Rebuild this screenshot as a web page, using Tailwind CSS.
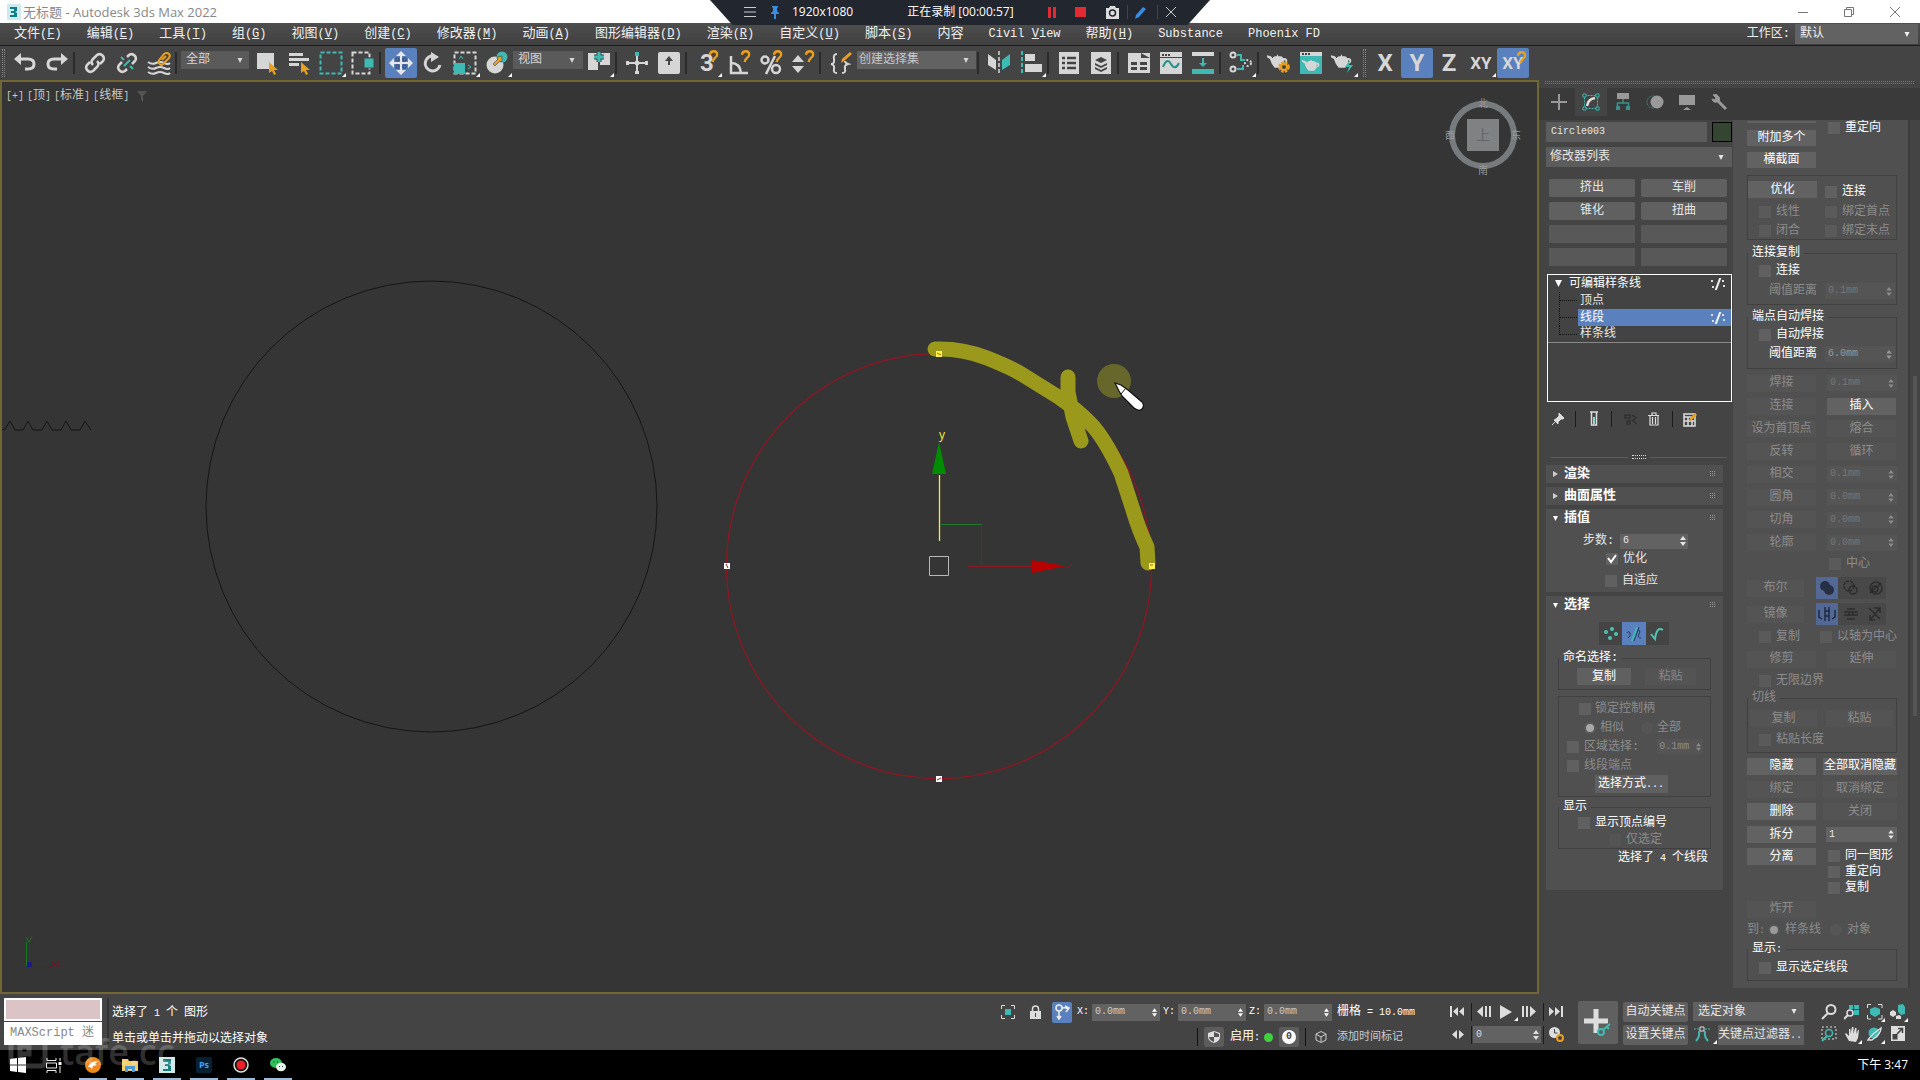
<!DOCTYPE html>
<html lang="zh-CN">
<head>
<meta charset="utf-8">
<title>无标题 - Autodesk 3ds Max 2022</title>
<script src="https://cdn.jsdelivr.net/npm/@tailwindcss/browser@4"></script>
</head>
<body class="flex h-screen flex-col overflow-hidden bg-[#444] font-['Liberation_Mono','Noto_Sans_CJK_SC',monospace] text-[12px] leading-4 text-[#e6e6e6]">

<svg class="hidden">
  <symbol id="spin" viewBox="0 0 6 10"><path d="M3 0 6 4H0zM3 10 0 6h6z" fill="currentColor"/></symbol>
  <symbol id="down" viewBox="0 0 6 6"><path d="M0 0h6L3 6z" fill="currentColor"/></symbol>
  <symbol id="fly" viewBox="0 0 4 4"><path d="M4 0v4H0z" fill="#fff"/></symbol>
  <symbol id="dots" viewBox="0 0 6 6"><path d="M0 0h1v1H0zM2 0h1v1H2zM4 0h1v1H4zM0 2h1v1H0zM2 2h1v1H2zM4 2h1v1H4zM0 4h1v1H0zM2 4h1v1H2zM4 4h1v1H4z" fill="#999"/></symbol>
  <symbol id="magnet" viewBox="0 0 12 14"><path d="M2 5C3 0 10 0 10 5c0 3-4 3-5 8" fill="none" stroke="#e8a020" stroke-width="2.500"/></symbol>
  <symbol id="teapot" viewBox="0 0 22 16"><path d="M0 2l4 1 2 2c1-2 2-2 4-2l1-2 1 2c3 0 4 0 5 2 5-1 6 5 1 6l-3 4H8L5 11 3 6 0 4zM18 7v3q3-2 0-3" fill="currentColor"/></symbol>
  <symbol id="seg" viewBox="0 0 14 12"><path d="M8.500 0H10L5.500 12H4z" fill="#fff" stroke="#fff" stroke-width=".5"/><path d="M0 2h2v2H0zM1 8h2v2H1zM11 2h2v2h-2zM12 7h2v2h-2z" fill="#ddd"/></symbol>
</svg>

<!-- Title bar with the recorder's floating strip -->
<header class="relative flex h-[23px] shrink-0 items-center bg-white pl-[7px] font-['Open_Sans','Noto_Sans_CJK_SC',sans-serif] text-[#888]">
  <svg width="14" height="16" viewBox="0 0 14 16"><rect width="14" height="16" rx="1" fill="#cfeaec"/><path d="M3 3h7v4l-2 1 2 1v4H3v-2h4V9H4V7h3V5H3z" fill="#0c7f86"/></svg>
  <h1 class="ml-[2px] text-[13px] whitespace-pre">无标题 - Autodesk 3ds Max 2022</h1>
  <div class="ml-auto flex h-full items-center gap-[36px] pr-[20px] text-[#777]">
    <button aria-label="最小化"><svg width="10" height="10"><path d="M0 5.500h10" stroke="currentColor"/></svg></button>
    <button aria-label="还原"><svg width="10" height="10" fill="none" stroke="currentColor"><path d="M.5 2.500h7v7h-7zM2.500 2.500v-2h7v7h-2"/></svg></button>
    <button aria-label="关闭"><svg width="10" height="10"><path d="M0 0l10 10M10 0L0 10" stroke="currentColor"/></svg></button>
  </div>
  <div class="absolute top-0 left-1/2 z-10 flex h-[25px] w-[500px] -translate-x-1/2 items-center bg-[#22262f] pb-[1px] pl-[34px] text-white [clip-path:polygon(0_0,100%_0,95.500%_100%,4.500%_100%)]">
    <svg width="12" height="12"><path d="M0 1.500h12M0 6h12M0 10.500h12" stroke="#ccc"/></svg>
    <svg class="ml-[14px]" width="10" height="13"><path d="M2 0h6v1.500H7V5l2 2v1H6v5H4V8H1V7l2-2V1.500H2z" fill="#3b8de0"/></svg>
    <span class="ml-[12px]">1920x1080</span>
    <span class="ml-[54px]">正在录制 [00:00:57]</span>
    <svg class="ml-[34px]" width="8" height="11"><path d="M0 0h3v11H0zM5 0h3v11H5z" fill="#e12a33"/></svg>
    <svg class="ml-[19px]" width="11" height="10"><rect width="11" height="10" fill="#e12a33"/></svg>
    <svg class="ml-[19px]" width="15" height="13"><path d="M1 2h3l1-2h5l1 2h3v11H1z" fill="#ddd"/><circle cx="7.500" cy="7" r="3" fill="none" stroke="#22262f" stroke-width="1.500"/></svg>
    <i class="ml-[7px] h-[14px] w-px bg-[#444]"></i>
    <svg class="ml-[7px]" width="12" height="13"><path d="M0 13l1-4 7-8 3 2-7 8z" fill="#3b8de0"/></svg>
    <i class="ml-[10px] h-[14px] w-px bg-[#444]"></i>
    <svg class="ml-[8px]" width="10" height="10"><path d="M0 0l10 10M10 0L0 10" stroke="#ccc"/></svg>
  </div>
</header>

<!-- Menu bar -->
<nav class="flex h-[23px] shrink-0 items-center gap-[25px] border-b border-[#1c1c1c] bg-linear-to-b from-[#4e4e4e] to-[#404040] pl-[14px] text-[13px] whitespace-pre text-[#f0f0f0] [&_span]:text-[12px]">
  <a href="#">文件<span>(<u>F</u>)</span></a><a href="#">编辑<span>(<u>E</u>)</span></a><a href="#">工具<span>(<u>T</u>)</span></a><a href="#">组<span>(<u>G</u>)</span></a><a href="#">视图<span>(<u>V</u>)</span></a><a href="#">创建<span>(<u>C</u>)</span></a><a href="#">修改器<span>(<u>M</u>)</span></a><a href="#">动画<span>(<u>A</u>)</span></a><a href="#">图形编辑器<span>(<u>D</u>)</span></a><a href="#">渲染<span>(<u>R</u>)</span></a><a href="#">自定义<span>(<u>U</u>)</span></a><a href="#">脚本<span>(<u>S</u>)</span></a><a href="#">内容</a><a href="#"><span>Civil <u>V</u>iew</span></a><a href="#">帮助<span>(<u>H</u>)</span></a><a href="#"><span>Substance</span></a><a href="#"><span>Phoenix FD</span></a>
  <div class="ml-auto flex h-full items-center pr-[2px] text-[12px]">
    <label for="ws" class="pr-[5px]">工作区:</label>
    <div class="flex h-[20px] w-[123px] items-center bg-[#626262] pr-[8px] pl-[5px]"><select id="ws" class="min-w-0 flex-1 appearance-none"><option>默认</option></select><svg width="6" height="5"><use href="#down"/></svg></div>
  </div>
</nav>

<!-- Main toolbar -->
<div class="flex h-[34px] shrink-0 items-center pl-[2px] text-[#d6d6d6] [&_i]:h-[22px] [&_i]:w-[6px] [&_i]:border-l-2 [&_i]:border-[#2a2a2a] [&>button]:relative [&>button]:grid [&>button]:h-[30px] [&>button]:w-[32px] [&>button]:shrink-0 [&>button]:place-items-center">
  <span class="mr-[4px] h-[28px] w-[3px] border-x border-dotted border-[#888]"></span>
  <button aria-label="撤销"><svg width="22" height="20" fill="none" stroke="currentColor" stroke-width="3"><path d="M4 6h10q6 0 6 5t-6 5h-3"/><path d="M0 6l7-6v12z" fill="currentColor" stroke="none"/></svg></button>
  <button aria-label="重做"><svg width="22" height="20" fill="none" stroke="currentColor" stroke-width="3"><path d="M18 6H8q-6 0-6 5t6 5h3"/><path d="M22 6l-7-6v12z" fill="currentColor" stroke="none"/></svg></button>
  <i></i>
  <button aria-label="链接"><svg width="22" height="22" viewBox="0 0 22 22" fill="none" stroke="currentColor" stroke-width="2.500"><path d="M9 13q-3-3 0-6l4-4q3-2 5.500.5T19 9l-3 3M13 9q3 3 0 6l-4 4q-3 2-5.500-.5T3 13l3-3"/></svg></button>
  <button aria-label="取消链接"><svg width="22" height="22" viewBox="0 0 22 22" fill="none" stroke="currentColor" stroke-width="2.500"><path d="M11 5l2-2q3-2 5.500.5T19 9l-3 3M11 17l-2 2q-3 2-5.500-.5T3 13l3-3"/><path d="M8 8L5 5M14 14l3 3M8 14l6-6" stroke="#3fb9b3" stroke-width="2"/></svg></button>
  <button aria-label="绑定到空间扭曲"><svg width="24" height="24" viewBox="0 0 24 24" fill="none" stroke="currentColor" stroke-width="2"><path d="M1 11q4 3 8 1t8 0 6 0M1 16q4 3 8 1t8 0 6 0M1 21q4 3 8 1t8 0 6 0"/><path d="M13 13q-3-2 0-5l4-5q3-2 5 0t-1 5l-5 5q-2 2-3 0M15 9l4-4" stroke="#e8a020"/></svg></button>
  <i></i>
  <div class="mr-[2px] mb-[6px] flex h-[18px] w-[68px] items-center bg-[#5a5a5a] pr-[6px] pl-[5px]"><select aria-label="选择过滤器" class="min-w-0 flex-1 appearance-none"><option>全部</option></select><svg width="6" height="5"><use href="#down"/></svg></div>
  <button aria-label="选择对象"><svg width="24" height="24"><rect x="2" y="2" width="17" height="16" fill="currentColor"/><path d="M14 11v11l3-2 2 4 2-1-2-4h4z" fill="#e8a020"/></svg></button>
  <button aria-label="按名称选择"><svg width="24" height="24"><path d="M2 2h14v3H2zM2 7h20v3H2zM2 12h10v3H2z" fill="currentColor"/><path d="M14 11v11l3-2 2 4 2-1-2-4h4z" fill="#e8a020"/></svg></button>
  <button aria-label="矩形选择区域"><svg width="24" height="24"><rect x="1.500" y="1.500" width="21" height="21" fill="none" stroke="#3fb9b3" stroke-width="2" stroke-dasharray="4 2"/></svg><svg class="absolute right-[1px] bottom-[1px]" width="4" height="4"><use href="#fly"/></svg></button>
  <button aria-label="窗口/交叉"><svg width="24" height="24"><rect x="1.500" y="1.500" width="17" height="21" fill="none" stroke="currentColor" stroke-width="2" stroke-dasharray="4 2"/><rect x="13" y="7" width="10" height="10" fill="#3fb9b3" stroke="#444"/></svg></button>
  <i></i>
  <button aria-label="选择并移动" class="rounded-xs bg-[#5a80bd]"><svg width="24" height="24" viewBox="0 0 24 24"><path d="M12 0l5 5h-4v6h6V7l5 5-5 5v-4h-6v6h4l-5 5-5-5h4v-6H5v4l-5-5 5-5v4h6V5H7z" fill="#e6e6e6"/><path d="M7 7h3v3H7zM14 7h3v3h-3zM7 14h3v3H7zM14 14h3v3h-3z" fill="none" stroke="#2f4568"/></svg></button>
  <button aria-label="选择并旋转"><svg width="20" height="22" fill="none" stroke="currentColor" stroke-width="3"><path d="M11 4A7.500 7.500 0 1 0 17 13"/><path d="M8 0l8 5-8 5z" fill="currentColor" stroke="none"/></svg></button>
  <button aria-label="选择并缩放"><svg width="24" height="24"><rect x="1.500" y="1.500" width="21" height="21" fill="none" stroke="currentColor" stroke-width="2" stroke-dasharray="4 2"/><rect x="1" y="12" width="11" height="11" fill="#3fb9b3"/><path d="M6 8l2-3 2 3M15 14l3 2-3 2" fill="none" stroke="#3fb9b3"/></svg><svg class="absolute right-[1px] bottom-[1px]" width="4" height="4"><use href="#fly"/></svg></button>
  <button aria-label="选择并放置"><svg width="24" height="24"><circle cx="10" cy="14" r="8.500" fill="currentColor"/><circle cx="17" cy="6" r="5.500" fill="#3fb9b3"/><path d="M17 5v6l-2-1-5 5-2-2 5-5-1-2z" fill="#e8a020" stroke="#444" stroke-width=".6"/></svg><svg class="absolute right-[1px] bottom-[1px]" width="4" height="4"><use href="#fly"/></svg></button>
  <div class="mb-[6px] flex h-[18px] w-[70px] items-center bg-[#5a5a5a] pr-[8px] pl-[5px]"><select aria-label="参考坐标系" class="min-w-0 flex-1 appearance-none"><option>视图</option></select><svg width="6" height="5"><use href="#down"/></svg></div>
  <button aria-label="使用轴点中心"><svg width="24" height="24"><path d="M1 2h10v17H1zM13 2h10v12H13z" fill="currentColor"/><path d="M12 1v10M7 6h10" stroke="#444" stroke-width="5"/><path d="M12 1v10M7 6h10" stroke="#3fb9b3" stroke-width="3"/></svg><svg class="absolute right-[1px] bottom-[1px]" width="4" height="4"><use href="#fly"/></svg></button>
  <i></i>
  <button aria-label="选择并操纵"><svg width="22" height="24"><path d="M11 3v19M1 12h20" stroke="currentColor" stroke-width="2"/><rect x="9" y="1" width="4" height="4" fill="#3fb9b3"/><path d="M0 10h3v4H0zM19 10h3v4h-3zM9 20h4v3H9zM9 10h4v4H9z" fill="currentColor"/></svg></button>
  <button aria-label="键盘快捷键覆盖切换"><svg width="22" height="22"><rect width="22" height="22" rx="2" fill="currentColor"/><path d="M11 4l4 5h-3v4h-2V9H7z" fill="#444"/></svg></button>
  <i></i>
  <button aria-label="捕捉开关"><span class="font-['Roboto',sans-serif] text-[24px] font-bold">3</span><svg class="absolute top-[2px] right-[4px]" width="11" height="13"><use href="#magnet"/></svg><svg class="absolute right-[1px] bottom-[1px]" width="4" height="4"><use href="#fly"/></svg></button>
  <button aria-label="角度捕捉切换"><svg width="22" height="24" fill="none" stroke="currentColor" stroke-width="2.500"><path d="M3 5v17h17M3 12q9 0 10 10"/></svg><svg class="absolute top-[2px] right-[4px]" width="11" height="13"><use href="#magnet"/></svg></button>
  <button aria-label="百分比捕捉切换"><svg width="24" height="24" fill="none" stroke="currentColor" stroke-width="2.500"><circle cx="6" cy="9" r="3.500"/><circle cx="17" cy="18" r="4"/><path d="M16 5L7 23"/></svg><svg class="absolute top-[2px] right-[4px]" width="11" height="13"><use href="#magnet"/></svg></button>
  <button aria-label="微调器捕捉切换"><svg width="24" height="24" fill="currentColor"><path d="M7 4l6 7H1zM7 22l-6-7h12z"/></svg><svg class="absolute top-[2px] right-[4px]" width="11" height="13"><use href="#magnet"/></svg></button>
  <i></i>
  <button aria-label="编辑命名选择集"><svg width="24" height="24" fill="none" stroke="currentColor" stroke-width="2"><path d="M8 3Q4 3 5 8t-3 5q4 1 3 5t3 4M13 22q4 0 3-4t3-5q-3-1-3-3"/><path d="M12 12l1-4 8-7 2 2-8 7z" fill="#e8a020" stroke="none"/></svg></button>
  <div class="mr-[1px] mb-[6px] flex h-[18px] w-[119px] items-center bg-[#626262] pr-[7px] pl-[2px]"><select aria-label="创建选择集" class="min-w-0 flex-1 appearance-none text-[#c8c8c8]"><option>创建选择集</option></select><svg width="6" height="5"><use href="#down"/></svg></div>
  <i></i>
  <button aria-label="镜像"><svg width="24" height="24"><path d="M1 3l8 6v10l-8-5z" fill="currentColor"/><path d="M23 3l-8 6v10l8-5z" fill="#3fb9b3"/><path d="M12 0v24" stroke="currentColor" stroke-width="1.500" stroke-dasharray="4 2"/></svg></button>
  <button aria-label="对齐"><svg width="24" height="24"><path d="M3 0v24" stroke="#3fb9b3" stroke-width="2" stroke-dasharray="4 2"/><path d="M6 3h10v7H6zM6 13h17v8H6z" fill="currentColor"/></svg><svg class="absolute right-[1px] bottom-[1px]" width="4" height="4"><use href="#fly"/></svg></button>
  <i></i>
  <button aria-label="切换场景资源管理器"><svg width="22" height="24"><path d="M1 1h20v22H1z" fill="currentColor"/><path d="M4 7h3M4 12h3M4 17h3M9 7h9M9 12h9M9 17h9" stroke="#444" stroke-width="2.500"/></svg></button>
  <button aria-label="切换层资源管理器"><svg width="22" height="24"><path d="M1 1h20v22H1z" fill="currentColor"/><path d="M11 6l6 3-6 3-6-3zM5 12l6 3 6-3v2l-6 3-6-3zM5 16l6 3 6-3v2l-6 3-6-3z" fill="#444"/></svg></button>
  <i></i>
  <button aria-label="显示功能区"><svg width="24" height="22"><path d="M1 1h22v20H1z" fill="currentColor"/><path d="M14 1v5h9M4 10h6v3H4zM13 10h7v3h-7zM4 15h6v3H4zM13 15h7v3h-7z" fill="#444"/></svg></button>
  <button aria-label="曲线编辑器"><svg width="24" height="22"><path d="M1 0h22v22H1z" fill="currentColor"/><path d="M1 5.500h22" stroke="#444"/><path d="M3 2h2v2H3zM6 2h2v2H6zM9 2h2v2H9z" fill="#444"/><path d="M4 15q4-10 8-3t8-1" fill="none" stroke="#23908c" stroke-width="2"/></svg></button>
  <button aria-label="图解视图"><svg width="24" height="24"><path d="M1 18h22v5H1z" fill="#3fb9b3"/><path d="M1 1h22v4H1z" fill="currentColor"/><path d="M11 7h2v5h3l-4 4-4-4h3z" fill="#3fb9b3"/></svg></button>
  <i></i>
  <button aria-label="材质编辑器"><svg width="24" height="24" fill="none" stroke="currentColor" stroke-width="2"><circle cx="4" cy="4" r="2.500"/><circle cx="4" cy="18" r="2.500"/><circle cx="19" cy="12" r="3" stroke-dasharray="2 2"/><path d="M8 4h4v5h4M8 18h6v-4" stroke="#3fb9b3"/></svg><svg class="absolute right-[1px] bottom-[1px]" width="4" height="4"><use href="#fly"/></svg></button>
  <i></i>
  <button aria-label="渲染设置"><svg width="24" height="22"><svg y="1" width="21" height="16"><use href="#teapot"/></svg><circle cx="17" cy="15" r="4" fill="#444" stroke="#e8a020" stroke-width="3.500" stroke-dasharray="2.200 1"/><circle cx="17" cy="15" r="3" fill="none" stroke="#e8a020" stroke-width="2"/></svg></button>
  <button aria-label="渲染帧窗口"><svg width="24" height="22"><path d="M1 0h22v22H1z" fill="#3fb9b3"/><path d="M1 0h22v4H1z" fill="currentColor"/><path d="M3 1h2v2H3zM6 1h2v2H6zM9 1h2v2H9z" fill="#444"/><svg x="3" y="6" width="18" height="14"><use href="#teapot"/></svg></svg></button>
  <button aria-label="渲染产品"><svg width="24" height="22"><svg y="1" width="21" height="16"><use href="#teapot"/></svg><path d="M18 9l-4 6h4l-2 6 6-8h-4z" fill="#3fb9b3"/></svg><svg class="absolute right-[1px] bottom-[1px]" width="4" height="4"><use href="#fly"/></svg></button>
  <span class="mr-[3px] ml-[4px] h-[28px] w-[3px] border-x border-dotted border-[#888]"></span>
  <button class="font-['Roboto',sans-serif] text-[24px] font-bold">X</button>
  <button class="rounded-xs bg-[#5a80bd] font-['Roboto',sans-serif] text-[24px] font-bold">Y</button>
  <button class="font-['Roboto',sans-serif] text-[24px] font-bold">Z</button>
  <button class="font-['Roboto',sans-serif] text-[17px] font-bold">XY<svg class="absolute right-[1px] bottom-[1px]" width="4" height="4"><use href="#fly"/></svg></button>
  <button class="rounded-xs bg-[#5a80bd] font-['Roboto',sans-serif] text-[17px] font-bold">XY<svg class="absolute top-[3px] right-[2px]" width="11" height="13"><use href="#magnet"/></svg></button>
</div>

<div class="flex min-h-0 flex-1">
  <!-- Viewport: top view, wireframe -->
  <main class="relative min-w-0 flex-1 overflow-hidden border-2 border-[#6f6734] bg-[#353535]">
    <div class="absolute top-[6px] left-[4px] z-10 flex items-center gap-[3px] text-[#c8c8c8] [&_b]:text-[10px] [&_b]:font-normal">
      <button><b>[+]</b></button><button><b>[</b>顶<b>]</b></button><button><b>[</b>标准<b>]</b></button><button><b>[</b>线框<b>]</b></button>
      <svg class="ml-[5px]" width="10" height="11"><path d="M0 0h10L6 5v6L4 9V5z" fill="#555"/></svg>
    </div>
    <svg class="block h-full w-full text-[12px]">
      <g transform="translate(-2 -82)" fill="none">
        <circle cx="431.500" cy="506.500" r="225.500" stroke="#151515"/>
        <path d="M2 430l3-1 5-8 5 9h8l5-9 5 9h9l5-9 5 9h9l5-9 5 9h9l5-9 6 9" stroke="#151515"/>
        <circle cx="939" cy="566" r="212.500" stroke="#8c1722" stroke-width="1.300"/>
        <path d="M935 349Q962 348 987 358T1023 375L1060 398Q1076 409 1090 423T1121 473L1133 510Q1139 530 1147 547L1148 563M1068 377V392L1073 417 1081 441" stroke="#9b991b" stroke-width="15" stroke-linecap="round" stroke-linejoin="round"/>
        <path d="M936 351h6v6h-6zM1149 563h6v6h-6z" fill="#fff34a"/>
        <path d="M937 353l4 2M1150 565h3" stroke="#8c6a10"/>
        <path d="M724 563h6v6h-6zM936 776h6v6h-6z" fill="#fff"/>
        <path d="M726 564l2 4M937 780l4-2" stroke="#8c1722"/>
        <circle cx="1114" cy="381" r="17" fill="#67672b"/>
        <path d="M1115 383l4 8 3 5 12 12q5 4 8 1t0-7l-14-12-7-5z" fill="#fff" stroke="#111" stroke-width="1.200"/>
        <path d="M1121 394l5-6" stroke="#111"/>
        <path d="M939.500 475v66" stroke="#f5f038" stroke-width="1.300"/>
        <path d="M939 442l7 32h-14z" fill="#008c00"/>
        <path d="M940 524.500h42" stroke="#1c7a28"/>
        <path d="M981.500 525v41M968 566.500h66" stroke="#8c1722"/>
        <path d="M1032 560v13l34-7z" fill="#b80000"/>
        <path d="M1067 568l5-4" stroke="#8c1722"/>
        <path d="M929.500 556.500h19v19h-19z" stroke="#b8b8b8"/>
        <text x="939" y="439" fill="#f5f038" class="font-['Open_Sans',sans-serif]">y</text>
        <path d="M26.500 942v24M26 937l3 5 3-5" stroke="#157a22"/>
        <path d="M32 967.500h18M50 967l9-5M52 962l7 5" stroke="#7a1020"/>
        <path d="M27 962h5v5h-5z" fill="#1a1a8a"/>
      </g>
    </svg>
    <div class="absolute top-[14px] right-[16px] z-10 text-[10px] leading-3 text-[#999]">
      <svg width="76" height="82">
        <circle cx="38" cy="39" r="31" fill="none" stroke="#777b7d" stroke-width="6"/>
        <rect x="22" y="23" width="32" height="32" fill="#7f8182"/>
        <g fill="#9a9a9a" text-anchor="middle">
          <text x="38" y="11">北</text><text x="38" y="78">南</text><text x="5" y="43">西</text><text x="71" y="43">东</text>
          <text x="38" y="44" fill="#626568" font-size="14">上</text>
        </g>
      </svg>
    </div>
  </main>

  <!-- Command panel -->
  <aside class="flex w-[381px] shrink-0 flex-col whitespace-nowrap [&_input[type=checkbox]]:size-[12px] [&_input[type=checkbox]]:shrink-0 [&_input[type=checkbox]]:appearance-none [&_input[type=checkbox]]:bg-[#606060] [&_input[type=radio]]:size-[12px] [&_input[type=radio]]:appearance-none [&_input[type=radio]]:rounded-full [&_input[type=text]]:min-w-0 [&_input[type=text]]:flex-1 [&_input[type=text]]:text-[10px] [&_label]:flex [&_label]:items-center [&_legend]:px-[4px] [&_legend]:leading-3">
    <div class="mx-[6px] mt-[1px] h-[3px] shrink-0 border-y border-dotted border-[#777]"></div>
    <div class="mt-[4px] flex h-[32px] shrink-0 items-center bg-[#3a3a3a] pb-[4px] pl-[4px] [&>button]:grid [&>button]:h-full [&>button]:w-[32px] [&>button]:place-items-center">
      <button aria-label="创建"><svg width="16" height="16"><path d="M8 0v16M0 8h16" stroke="#999" stroke-width="2"/></svg></button>
      <button aria-label="修改" class="bg-[#444]"><svg width="18" height="18" fill="none"><rect x="2.500" y="2.500" width="13" height="13" stroke="#3fb9b3" stroke-dasharray="2 1"/><path d="M1 1h3v3H1zM14 1h3v3h-3zM1 14h3v3H1zM14 14h3v3h-3z" fill="#3a3a3a" stroke="#3fb9b3"/><path d="M5 13q1-7 8-8" stroke="#ddd" stroke-width="2.500"/></svg></button>
      <button aria-label="层次"><svg width="16" height="18"><path d="M2 0h12v6H2z" fill="#999"/><path d="M8 6v4M2.500 14v-4h11v4" fill="none" stroke="#3c8f8a" stroke-width="1.500"/><path d="M1 13h4v4H1zM11 13h4v4h-4z" fill="#3c8f8a"/></svg></button>
      <button aria-label="运动"><svg width="20" height="16"><circle cx="8" cy="8" r="6" fill="none" stroke="#3c8f8a" stroke-dasharray="2 1"/><circle cx="12" cy="8" r="6.500" fill="#999"/></svg></button>
      <button aria-label="显示"><svg width="18" height="16"><path d="M1 1h16v10H1zM5 16l4-3 4 3z" fill="#999"/></svg></button>
      <button aria-label="实用程序"><svg width="16" height="16" fill="none" stroke="#999"><path d="M6 6l9 9" stroke-width="3"/><path d="M2 1l3 3-1 2-3-1q1 4 5 3t2-5-6-2" fill="#999"/></svg></button>
    </div>

    <div class="flex min-h-0 flex-1">
      <!-- Modifier stack and rollouts -->
      <section class="ml-[7px] w-[186px] shrink-0 pt-[2px]">
        <div class="flex h-[20px] gap-[5px]">
          <input type="text" aria-label="对象名称" value="Circle003" class="bg-[#5c5c5c] pl-[5px]">
          <button aria-label="对象颜色" class="w-[20px] border border-black bg-[#344632]"></button>
        </div>
        <div class="mt-[5px] flex h-[20px] items-center bg-[#5c5c5c] pr-[8px] pl-[4px]"><select aria-label="修改器列表" class="min-w-0 flex-1 appearance-none"><option>修改器列表</option></select><svg width="6" height="5"><use href="#down"/></svg></div>
        <div class="mt-[12px] ml-[3px] grid w-[178px] auto-rows-[18px] grid-cols-2 gap-x-[6px] gap-y-[5px] [&>button]:rounded-xs [&>button]:bg-[#606060]">
          <button>挤出</button><button>车削</button><button>锥化</button><button>扭曲</button>
          <span class="bg-[#585858]"></span><span class="bg-[#585858]"></span><span class="bg-[#585858]"></span><span class="bg-[#585858]"></span>
        </div>
        <ul class="mt-[8px] ml-[1px] h-[128px] border border-white bg-[#434343] [&_li]:flex [&_li]:h-[17px] [&_li]:items-center">
          <li class="pl-[7px] text-white"><svg width="7" height="7"><use href="#down"/></svg><span class="ml-[7px] flex-1">可编辑样条线</span><svg class="mr-[6px]" width="14" height="12"><use href="#seg"/></svg></li>
          <li class="pl-[11px]"><span class="h-full w-[18px] border-l border-dotted border-[#111]"><span class="mt-[8px] block border-b border-dotted border-[#111]"></span></span><span class="ml-[3px]">顶点</span></li>
          <li class="pl-[11px]"><span class="h-full w-[18px] border-l border-dotted border-[#111]"><span class="mt-[8px] block border-b border-dotted border-[#111]"></span></span><span class="ml-[1px] flex h-full flex-1 items-center bg-[#5a80bd] pl-[2px] text-white"><span class="flex-1">线段</span><svg class="mr-[6px]" width="14" height="12"><use href="#seg"/></svg></span></li>
          <li class="border-b border-[#888] pl-[11px]"><span class="h-full w-[18px]"><span class="block h-[9px] border-b border-l border-dotted border-[#111]"></span></span><span class="ml-[3px]">样条线</span></li>
        </ul>
        <div class="mt-[6px] flex h-[22px] items-center pl-[5px] [&>i]:h-[16px] [&>i]:w-px [&>i]:bg-[#1c1c1c]">
          <button aria-label="锁定堆栈"><svg width="14" height="14"><path d="M8 1l5 5-1 1-2 0-3 3 0 2L3 8l2-1 3-3zM5 9L1 13" fill="#ddd" stroke="#ddd"/></svg></button>
          <i class="ml-[10px]"></i>
          <button aria-label="显示最终结果" class="ml-[14px]"><svg width="8" height="16"><path d="M0 1h8M1.500 1v13h5V1" fill="none" stroke="#ddd" stroke-width="1.500"/><path d="M3 6h2v7H3z" fill="#8fd8d0"/></svg></button>
          <i class="ml-[13px]"></i>
          <button aria-label="使唯一" class="ml-[12px]" disabled><svg width="14" height="12" fill="none" stroke="#303030" stroke-width="1.500"><path d="M1 2h5v3H1zM8 2l4 3-4 3M3 8h3v3H3zM9 8l4 3"/></svg></button>
          <button aria-label="移除修改器" class="ml-[10px]"><svg width="12" height="14" fill="none" stroke="#ddd" stroke-width="1.200"><path d="M0 3.500h11M4 3V1h4v2M2 4v9h8V4M4.500 5v7M7.500 5v7"/></svg></button>
          <i class="ml-[12px]"></i>
          <button aria-label="配置修改器集" class="ml-[10px]"><svg width="14" height="15"><path d="M1 2h11v12H1zM1 5h11M1 9h11M5 5v9M9 9v5" fill="none" stroke="#ddd" stroke-width="1.500"/><path d="M6 9l1-3 5-5 2 2-5 5z" fill="#e8a020"/></svg></button>
        </div>
        <div class="mt-[20px] flex h-[14px] items-center gap-[4px] px-[5px]"><hr class="flex-1 border-[#5c5c5c]"><span class="h-[4px] w-[14px] border-y border-dotted border-[#ddd]"></span><hr class="flex-1 border-[#5c5c5c]"></div>

        <div class="mt-px mr-[9px] flex flex-col gap-[4px] [&_h2]:flex [&_h2]:h-[18px] [&_h2]:items-center [&_h2]:pr-[7px] [&_h2]:pl-[7px] [&_h2]:text-[13px] [&_h2]:font-bold [&_h2]:text-white [&_h2>span]:ml-[6px] [&_h2>span]:flex-1 [&>div]:bg-[#505050]">
          <div><h2><svg width="5" height="6"><path d="M0 0l5 3-5 3z" fill="#ccc"/></svg><span>渲染</span><svg width="6" height="6"><use href="#dots"/></svg></h2></div>
          <div><h2><svg width="5" height="6"><path d="M0 0l5 3-5 3z" fill="#ccc"/></svg><span>曲面属性</span><svg width="6" height="6"><use href="#dots"/></svg></h2></div>
          <div class="h-[83px]">
            <h2><svg width="5" height="5"><use href="#down"/></svg><span>插值</span><svg width="6" height="6"><use href="#dots"/></svg></h2>
            <div class="mt-[6px] flex h-[16px] items-center pl-[37px]"><label for="steps" class="w-[37px]">步数:</label><span class="flex h-[15px] w-[68px] items-center bg-[#626262] pr-[2px] pl-[3px]"><input type="text" id="steps" value="6"><svg width="6" height="10"><use href="#spin"/></svg></span></div>
            <label class="mt-[1px] h-[18px] gap-[5px] pl-[60px]"><span class="grid"><input type="checkbox" checked class="col-start-1 row-start-1"><svg class="col-start-1 row-start-1" width="12" height="12"><path d="M2 5l3 4 5-7" fill="none" stroke="#fff" stroke-width="2"/></svg></span>优化</label>
            <label class="mt-[4px] h-[18px] gap-[5px] pl-[59px]"><input type="checkbox">自适应</label>
          </div>
          <div class="h-[294px]">
            <h2><svg width="5" height="5"><use href="#down"/></svg><span>选择</span><svg width="6" height="6"><use href="#dots"/></svg></h2>
            <div class="mt-[8px] ml-[53px] flex h-[23px] w-[70px] bg-[#444] [&>button]:grid [&>button]:flex-1 [&>button]:place-items-center">
              <button aria-label="顶点"><svg width="16" height="16" fill="#4cc4b4"><circle cx="3" cy="6" r="2"/><circle cx="9" cy="3" r="2"/><circle cx="13" cy="8" r="2"/><circle cx="7" cy="12" r="2"/></svg></button>
              <button aria-label="线段" class="bg-[#5a80bd]"><svg width="16" height="16" fill="none"><path d="M6 15l5-14" stroke="#3fb9b3" stroke-width="2"/><path d="M1 7q2-3 3 0t-2 5M12 4q3 0 1 4t2 4" stroke="#223a60"/><path d="M8 15l5-14" stroke="#223a60"/></svg></button>
              <button aria-label="样条线"><svg width="14" height="16"><path d="M1 8l4 5q1-7 3-9 2-2 5 0" fill="none" stroke="#4cc4b4" stroke-width="2"/></svg></button>
            </div>
            <fieldset class="mt-[7px] ml-[12px] h-[38px] w-[153px] border border-[#404040]"><legend class="text-white">命名选择:</legend>
              <div class="mt-[4px] flex gap-[14px] pl-[18px]"><button class="h-[17px] w-[54px] bg-[#606060] text-white">复制</button><button disabled class="h-[17px] w-[51px] bg-[#545454] text-[#888]">粘贴</button></div>
            </fieldset>
            <div class="mt-[6px] ml-[12px] h-[101px] w-[153px] border border-[#404040] pt-[2px] text-[#8c8c8c] [&_input[type=checkbox]]:bg-[#555]">
              <label class="h-[19px] gap-[4px] pl-[20px]"><input type="checkbox" disabled>锁定控制柄</label>
              <div class="flex h-[19px] items-center"><label class="gap-[4px] pl-[25px]"><input type="radio" name="alike" disabled checked class="border-2 border-[#5a5a5a] bg-[#aaa]">相似</label><label class="gap-[4px] pl-[17px]"><input type="radio" name="alike" disabled class="bg-[#555]">全部</label></div>
              <div class="flex h-[19px] items-center"><label class="gap-[5px] pl-[8px]"><input type="checkbox" disabled>区域选择:</label><span class="ml-[18px] flex h-[15px] w-[46px] items-center bg-[#555] px-[2px]"><input type="text" aria-label="区域选择" value="0.1mm" disabled><svg width="5" height="8"><use href="#spin"/></svg></span></div>
              <label class="h-[19px] gap-[5px] pl-[8px]"><input type="checkbox" disabled>线段端点</label>
              <button class="ml-[36px] block h-[18px] w-[73px] bg-[#606060] pl-[3px] text-left text-white">选择方式<span class="text-[10px]">...</span></button>
            </div>
            <fieldset class="mt-[4px] ml-[12px] h-[48px] w-[153px] border border-[#404040]"><legend class="text-white">显示</legend>
              <label class="mt-[1px] h-[18px] gap-[5px] pl-[19px] text-white"><input type="checkbox">显示顶点编号</label>
              <label class="h-[16px] gap-[5px] pl-[50px] text-[#8c8c8c]"><input type="checkbox" disabled class="opacity-30">仅选定</label>
            </fieldset>
            <p class="mt-px pr-[15px] text-right text-white">选择了<span class="text-[10px]"> 4 </span>个线段</p>
          </div>
        </div>
      </section>

      <!-- Geometry rollout -->
      <section class="mb-[6px] ml-[1px] flex w-[177px] shrink-0 flex-col border-r-2 border-[#3c3c3c] bg-[#505050] pt-[1px] pr-[11px] pl-[14px] [&_button]:h-[17px] [&_button]:w-[69px] [&_button]:bg-[#626262] [&_button]:text-white [&_button:disabled]:bg-[#545454] [&_button:disabled]:text-[#8c8c8c] [&_fieldset]:min-w-0 [&_fieldset]:border [&_fieldset]:border-[#404040] [&_input:disabled]:opacity-60 [&_label]:gap-[5px]">
        <div class="flex h-[47px] gap-[12px]">
          <div class="flex flex-col gap-[6px]"><span class="h-[2px] bg-[#606060]"></span><button class="mt-[1px]">附加多个</button><button>横截面</button></div>
          <label class="h-[13px] text-white"><input type="checkbox">重定向</label>
        </div>
        <div class="mt-[7px] grid h-[65px] shrink-0 grid-cols-[77px_71px] grid-rows-[27px_18px_19px] border border-[#404040] text-[#8c8c8c]">
          <span class="flex items-center"><button>优化</button></span><label class="pt-[4px] text-white"><input type="checkbox">连接</label>
          <label class="pl-[11px]"><input type="checkbox" disabled class="opacity-30">线性</label><label><input type="checkbox" disabled class="opacity-30">绑定首点</label>
          <label class="pl-[11px]"><input type="checkbox" disabled class="opacity-30">闭合</label><label><input type="checkbox" disabled class="opacity-30">绑定末点</label>
        </div>
        <fieldset class="mt-[7px] h-[58px]"><legend class="text-white">连接复制</legend>
          <label class="mt-[3px] h-[18px] pl-[11px] text-white"><input type="checkbox">连接</label>
          <div class="mt-[2px] flex h-[18px] items-center pl-[21px] text-[#8c8c8c]"><label for="thr1" class="w-[56px]">阈值距离</label><span class="flex h-[16px] w-[70px] items-center bg-[#555] px-[3px]"><input type="text" id="thr1" value="0.1mm" disabled><svg width="6" height="9"><use href="#spin"/></svg></span></div>
        </fieldset>
        <fieldset class="mt-[6px] h-[58px] text-white"><legend>端点自动焊接</legend>
          <label class="mt-[3px] h-[18px] pl-[11px]"><input type="checkbox">自动焊接</label>
          <div class="mt-[1px] flex h-[18px] items-center pl-[21px]"><label for="thr2" class="w-[56px]">阈值距离</label><span class="flex h-[16px] w-[70px] items-center bg-[#555] px-[3px] text-[#999]"><input type="text" id="thr2" value="6.0mm"><svg width="6" height="9"><use href="#spin"/></svg></span></div>
        </fieldset>
        <div class="mt-[3px] grid h-[182px] shrink-0 grid-cols-[69px_70px] grid-rows-8 items-center gap-x-[11px] text-[#8c8c8c] [&>span]:flex [&>span]:h-[16px] [&>span]:items-center [&>span]:bg-[#555] [&>span]:px-[3px]">
          <button disabled>焊接</button><span><input type="text" aria-label="焊接" value="0.1mm" disabled><svg width="6" height="9"><use href="#spin"/></svg></span>
          <button disabled>连接</button><button>插入</button>
          <button disabled>设为首顶点</button><button disabled>熔合</button>
          <button disabled>反转</button><button disabled>循环</button>
          <button disabled>相交</button><span><input type="text" aria-label="相交" value="0.1mm" disabled><svg width="6" height="9"><use href="#spin"/></svg></span>
          <button disabled>圆角</button><span><input type="text" aria-label="圆角" value="0.0mm" disabled><svg width="6" height="9"><use href="#spin"/></svg></span>
          <button disabled>切角</button><span><input type="text" aria-label="切角" value="0.0mm" disabled><svg width="6" height="9"><use href="#spin"/></svg></span>
          <button disabled>轮廓</button><span><input type="text" aria-label="轮廓" value="0.0mm" disabled><svg width="6" height="9"><use href="#spin"/></svg></span>
        </div>
        <label class="h-[20px] pl-[82px] text-[#8c8c8c]"><input type="checkbox" disabled class="opacity-30">中心</label>
        <div class="mt-[3px] flex h-[22px] items-center [&>button]:mr-[12px]"><button disabled class="max-w-[57px]">布尔</button>
          <div class="flex h-full bg-[#484848]"><span class="grid w-[22px] place-items-center bg-[#536894]"><svg width="16" height="16" fill="#262f44"><circle cx="6" cy="6" r="5"/><circle cx="10" cy="10" r="5"/></svg></span><span class="grid w-[25px] place-items-center"><svg width="16" height="16" fill="none" stroke="#2c2c2c" stroke-width="1.500"><circle cx="6" cy="6" r="5" stroke-dasharray="3 1"/><circle cx="10" cy="10" r="4"/></svg></span><span class="grid w-[23px] place-items-center"><svg width="16" height="16" fill="none" stroke="#2c2c2c" stroke-width="1.500"><circle cx="9" cy="8" r="6"/><circle cx="8" cy="9" r="3"/><path d="M3 13L14 3"/></svg></span></div>
        </div>
        <div class="mt-[4px] flex h-[22px] items-center [&>button]:mr-[12px]"><button disabled class="max-w-[57px]">镜像</button>
          <div class="flex h-full bg-[#484848]"><span class="grid w-[22px] place-items-center bg-[#536894]"><svg width="18" height="16" fill="none" stroke="#1d2840" stroke-width="1.500"><path d="M1 4v7l3 2M17 4v7l-3 2M7 1v14M11 1v14M7 5h4M7 10h4"/></svg></span><span class="grid w-[25px] place-items-center"><svg width="16" height="16" fill="none" stroke="#2c2c2c" stroke-width="1.500"><path d="M1 6h14M1 9h14M4 3h8M4 13h8M6 6v3M10 6v3"/></svg></span><span class="grid w-[23px] place-items-center"><svg width="16" height="16" fill="none" stroke="#2c2c2c" stroke-width="1.500"><path d="M2 2l11 11M13 2L4 13M7 2h6v5M3 9v5h5"/></svg></span></div>
        </div>
        <div class="mt-[3px] flex h-[18px] items-center text-[#8c8c8c]"><label class="pl-[12px]"><input type="checkbox" disabled class="opacity-30">复制</label><label class="pl-[20px]"><input type="checkbox" disabled class="opacity-30">以轴为中心</label></div>
        <div class="mt-[2px] flex h-[22px] items-center gap-[11px]"><button disabled>修剪</button><button disabled>延伸</button></div>
        <label class="h-[21px] pl-[12px] text-[#8c8c8c]"><input type="checkbox" disabled class="opacity-30">无限边界</label>
        <fieldset class="mt-[1px] h-[61px] text-[#8c8c8c]"><legend>切线</legend>
          <div class="mt-[6px] flex gap-[9px] pl-[2px] [&>button]:w-[67px]"><button disabled>复制</button><button disabled>粘贴</button></div>
          <label class="mt-[4px] h-[18px] pl-[11px]"><input type="checkbox" disabled class="opacity-30">粘贴长度</label>
        </fieldset>
        <div class="mt-[2px] grid h-[91px] shrink-0 grid-cols-[69px_74px] grid-rows-4 items-center gap-x-[7px] [&>button:nth-child(even)]:w-full">
          <button>隐藏</button><button>全部取消隐藏</button>
          <button disabled>绑定</button><button disabled>取消绑定</button>
          <button>删除</button><button disabled>关闭</button>
          <button>拆分</button><span class="ml-[3px] flex h-[15px] items-center bg-[#626262] px-[3px]"><input type="text" aria-label="拆分" value="1"><svg width="6" height="9"><use href="#spin"/></svg></span>
        </div>
        <div class="mt-[2px] flex h-[49px] shrink-0 gap-[12px] text-white"><button>分离</button>
          <div class="flex flex-col [&>label]:h-[16px]"><label><input type="checkbox">同一图形</label><label><input type="checkbox">重定向</label><label><input type="checkbox">复制</label></div></div>
        <div class="mt-[1px] flex h-[22px] items-center"><button disabled>炸开</button></div>
        <div class="flex h-[20px] items-center text-[#8c8c8c]"><span class="w-[21px]">到<span class="text-[10px]">:</span></span><label><input type="radio" name="to" disabled checked class="border-2 border-[#5a5a5a] bg-[#ccc]">样条线</label><label class="ml-[9px]"><input type="radio" name="to" disabled class="bg-[#5a5a5a]">对象</label></div>
        <fieldset class="mt-[3px] h-[38px] text-white"><legend>显示<span class="text-[10px]">:</span></legend>
          <label class="mt-[3px] h-[18px] pl-[11px]"><input type="checkbox">显示选定线段</label>
        </fieldset>
      </section>
      <div class="w-[9px] shrink-0"><div class="mt-[256px] ml-[3px] h-[340px] w-[4px] bg-[#555]"></div></div>
    </div>
  </aside>
</div>

<!-- Status bar -->
<footer class="flex h-[56px] shrink-0 items-start pt-[4px] pl-[4px]">
  <div class="flex w-[98px] flex-col gap-[1px]">
    <div class="h-[23px] border-2 border-white bg-[#dcc3c6]"></div>
    <input aria-label="MAXScript 侦听器" value="MAXScript 迷" class="h-[23px] w-full bg-white px-[6px] pb-[6px] text-[#888]">
  </div>
  <div class="ml-[5px] h-[46px] border-l-2 border-[#333] pl-[3px] text-white"><p class="mt-[7px] whitespace-pre">选择了<span class="text-[10px]"> 1 </span>个<span class="text-[10px]"> </span>图形</p><p class="mt-[9px]">单击或单击并拖动以选择对象</p></div>

  <div class="mt-[3px] ml-auto flex w-[414px] shrink-0 flex-col gap-[4px] text-white">
    <div class="flex h-[22px] items-center [&_label]:text-[10px] [&_label+span]:ml-[3px] [&_label+span]:flex [&_label+span]:h-[17px] [&_label+span]:w-[68px] [&_label+span]:items-center [&_label+span]:bg-[#626262] [&_label+span]:px-[3px] [&_input]:min-w-0 [&_input]:flex-1 [&_input]:text-[10px] [&_input]:text-[#ccc]">
      <button aria-label="孤立当前选择"><svg width="14" height="14" fill="none" stroke="#ddd"><path d="M.5 4V.5H4M10 .5h3.500V4M13.500 10v3.500H10M4 13.500H.5V10"/><path d="M4 4h6v6H4z" fill="#3fb9b3" stroke="none"/></svg></button>
      <button aria-label="选择锁定切换" class="ml-[15px]"><svg width="11" height="14"><path d="M2.500 7V4a3 3 0 0 1 6 0v3" fill="none" stroke="#ddd" stroke-width="1.500"/><path d="M0 6h11v8H0z" fill="#ddd"/><path d="M5 8h1v4H5z" fill="#444"/></svg></button>
      <button aria-label="变换输入模式" class="ml-[11px] grid size-[21px] place-items-center rounded-xs bg-[#5a80bd]"><svg width="16" height="16" fill="none" stroke="#eee" stroke-width="1.500"><circle cx="5" cy="4" r="3"/><path d="M5 7v6M3 12l2 3 2-3M8 4q4-1 6 1M11 2l4 2-3 4"/></svg></button>
      <label for="cx" class="ml-[5px]">X:</label><span><input id="cx" value="0.0mm"><svg width="5" height="9"><use href="#spin"/></svg></span>
      <label for="cy" class="ml-[3px]">Y:</label><span><input id="cy" value="0.0mm"><svg width="5" height="9"><use href="#spin"/></svg></span>
      <label for="cz" class="ml-[3px]">Z:</label><span><input id="cz" value="0.0mm"><svg width="5" height="9"><use href="#spin"/></svg></span>
      <span class="ml-[5px] whitespace-pre">栅格<span class="text-[10px]"> = 10.0mm</span></span>
    </div>
    <div class="flex h-[20px] items-center pl-[196px]">
      <i class="h-[18px] w-px bg-[#111]"></i>
      <button aria-label="自适应降级" class="ml-[6px] grid size-[20px] place-items-center rounded-xs bg-[#5c5c5c]"><svg width="12" height="12"><path d="M6 0l6 2v4q0 4-6 6Q0 10 0 6V2z" fill="#ddd"/><path d="M6 1v5h5q0 0 0-3zM1 6h5v5Q1 9 1 6z" fill="#555"/></svg></button>
      <span class="ml-[6px] whitespace-nowrap">启用<span class="text-[10px]">:</span></span>
      <i class="ml-[4px] size-[9px] rounded-full bg-[#3fd23f]"></i>
      <button class="ml-[6px] grid size-[20px] place-items-center rounded-xs bg-[#5c5c5c]"><span class="grid size-[14px] place-items-center rounded-full bg-white text-[10px] leading-none font-bold text-[#444]">0</span></button>
      <i class="ml-[6px] h-[18px] w-px bg-[#111]"></i>
      <svg class="ml-[9px]" width="12" height="12" fill="none" stroke="#ccc"><path d="M6 .5l5 2.500v6L6 11.500 1 9V3zM1 3l5 3 5-3M6 6v5"/></svg>
      <button class="ml-[10px] text-[11px] whitespace-nowrap text-[#ccc]">添加时间标记</button>
    </div>
  </div>

  <div class="mt-[3px] ml-[35px] grid w-[118px] shrink-0 grid-rows-2 gap-[2px] text-[#ddd]">
    <div class="flex h-[21px] items-center [&_svg]:fill-current">
      <button aria-label="转至开头"><svg width="15" height="11"><path d="M0 0h2v11H0zM8 1v9L3 5.500zM14 1v9L9 5.500z"/></svg></button>
      <i class="ml-[6px] h-[18px] w-px bg-[#1c1c1c]"></i>
      <button aria-label="上一帧" class="ml-[5px]"><svg width="14" height="11"><path d="M6 0v11L0 5.500zM8 0h2v11H8zM12 0h2v11h-2z"/></svg></button>
      <button aria-label="播放动画" class="ml-[9px]"><svg width="12" height="14"><path d="M0 0l12 7-12 7z"/></svg></button>
      <svg class="mt-[14px] ml-[2px]" width="4" height="4"><use href="#fly"/></svg>
      <button aria-label="下一帧" class="ml-[4px]"><svg width="14" height="11"><path d="M8 0v11l6-5.500zM0 0h2v11H0zM4 0h2v11H4z"/></svg></button>
      <i class="ml-[7px] h-[18px] w-px bg-[#1c1c1c]"></i>
      <button aria-label="转至结尾" class="ml-[4px]"><svg width="15" height="11"><path d="M13 0h2v11h-2zM1 1v9l5-4.500zM7 1v9l5-4.500z"/></svg></button>
    </div>
    <div class="flex h-[21px] items-center">
      <svg class="ml-[2px]" width="12" height="9" fill="currentColor"><path d="M5 0v9L0 4.500zM7 0v9l5-4.500z"/></svg>
      <i class="ml-[7px] h-[18px] w-px bg-[#1c1c1c]"></i>
      <span class="ml-[1px] flex h-[17px] w-[68px] items-center bg-[#626262] pr-[2px] pl-[3px]"><input aria-label="当前帧" value="0" class="min-w-0 flex-1 text-[10px]"><svg width="6" height="10"><use href="#spin"/></svg></span>
      <i class="ml-[2px] h-[18px] w-px bg-[#1c1c1c]"></i>
      <button aria-label="时间配置" class="ml-[5px]"><svg width="15" height="15"><circle cx="5.500" cy="5.500" r="5.500" fill="#ddd"/><path d="M5.500 2v4h3" fill="none" stroke="#444"/><circle cx="11" cy="11" r="3" fill="#444" stroke="#e8a020" stroke-width="2"/></svg></button>
    </div>
  </div>

  <button aria-label="设置关键点" class="mt-[3px] ml-[10px] grid h-[43px] w-[40px] shrink-0 place-items-center rounded-xs bg-[#606060]"><svg width="28" height="28"><path d="M12 0v24M0 12h24" stroke="#ddd" stroke-width="5"/><path d="M15 24L26 16" stroke="#606060" stroke-width="5"/><circle cx="17" cy="23" r="3" fill="none" stroke="#3fb9b3" stroke-width="2"/><path d="M19 21l7-6M23 18l2 2" stroke="#3fb9b3" stroke-width="2"/></svg></button>
  <div class="mt-[4px] ml-[5px] flex w-[65px] shrink-0 flex-col gap-[3px] [&>button]:h-[20px] [&>button]:rounded-xs [&>button]:bg-[#606060]"><button>自动关键点</button><button>设置关键点</button></div>
  <div class="mt-[4px] ml-[5px] flex w-[111px] shrink-0 flex-col gap-[4px]">
    <div class="flex h-[19px] items-center bg-[#606060] pr-[7px] pl-[5px]"><select aria-label="选定对象" class="min-w-0 flex-1 appearance-none"><option>选定对象</option></select><svg width="6" height="5"><use href="#down"/></svg></div>
    <div class="flex items-center"><svg width="20" height="18" fill="none"><path d="M3 15q4-4 3-10M15 15q-4-4-3-10" stroke="#3fb9b3" stroke-width="2"/><path d="M1 3h5M12 3h5" stroke="#3fb9b3" stroke-dasharray="2 1"/><path d="M7 1h4v4H7z" stroke="#ddd"/></svg><svg class="mt-[14px] mr-[1px]" width="4" height="4"><use href="#fly"/></svg><button class="h-[20px] flex-1 bg-[#606060] text-left whitespace-nowrap">关键点过滤器<span class="text-[10px]">..</span></button></div>
  </div>
  <div class="mt-[3px] mr-[12px] ml-[15px] grid shrink-0 grid-cols-4 grid-rows-2 gap-x-[3px] gap-y-[1px] [&>button]:relative [&>button]:grid [&>button]:h-[21px] [&>button]:w-[20px] [&>button]:place-items-center">
    <button aria-label="缩放"><svg width="16" height="16" fill="none" stroke="#ddd" stroke-width="2"><circle cx="10" cy="5.500" r="4.500"/><path d="M7 9l-6 6"/></svg></button>
    <button aria-label="缩放所有视图"><svg width="16" height="16" fill="none"><path d="M5 1h4v4H5zM10 1h5v4h-5zM10 6h5v5h-5z" fill="#3fb9b3"/><circle cx="6" cy="9" r="3" stroke="#ddd" stroke-width="1.500"/><path d="M4 11l-4 4" stroke="#ddd" stroke-width="2"/></svg></button>
    <button aria-label="最大化显示"><svg width="16" height="16" fill="none" stroke="#ddd"><path d="M.5 4V.5H4M11 .5h4V4M15 11v4h-4M4 15H.5v-4"/><path d="M8 3l5 2v5l-5 3-5-3V5z" fill="#3fb9b3" stroke="none"/></svg><svg class="absolute right-0 bottom-0" width="4" height="4"><use href="#fly"/></svg></button>
    <button aria-label="所有视图最大化显示"><svg width="16" height="16"><path d="M8 1l5-1 2 3v7l-4 1-3-3z" fill="#3fb9b3"/><path d="M0 8l3-2 3 2v3l-3 2-3-2zM6 12l3-1 2 1v3H6z" fill="#ddd"/></svg><svg class="absolute right-0 bottom-0" width="4" height="4"><use href="#fly"/></svg></button>
    <button aria-label="缩放区域"><svg width="16" height="16" fill="none"><path d="M1 1h14v12H1z" stroke="#ddd" stroke-dasharray="2 2"/><circle cx="8" cy="7" r="3.500" stroke="#3fb9b3" stroke-width="1.500"/><path d="M6 10l-5 5" stroke="#3fb9b3" stroke-width="2"/></svg></button>
    <button aria-label="平移视图"><svg width="15" height="16"><path d="M4 15L0 8l1-1 3 3V3h1.500v5L7 1h1.500v7L10 2h1.500v6L13 4h1l-1 8-2 4z" fill="#ddd"/></svg><svg class="absolute right-0 bottom-0" width="4" height="4"><use href="#fly"/></svg></button>
    <button aria-label="环绕"><svg width="16" height="16"><circle cx="7" cy="7" r="5.500" fill="#3fb9b3"/><path d="M1 14Q4 9 14 2q0 6-9 12z" fill="none" stroke="#ddd" stroke-width="1.500"/></svg><svg class="absolute right-0 bottom-0" width="4" height="4"><use href="#fly"/></svg></button>
    <button aria-label="最大化视口切换"><svg width="14" height="15"><path d="M0 0h14v15H0z" fill="#ddd"/><path d="M1.500 8h5v5.500h-5z" fill="#444"/><path d="M6 8l5-5M7 2.500h4.500V7" fill="none" stroke="#444" stroke-width="1.500"/></svg></button>
  </div>
</footer>

<!-- Windows taskbar -->
<div class="relative flex h-[30px] shrink-0 items-stretch bg-black [&>a]:grid [&>a]:w-[28px] [&>a]:place-items-center [&>a]:border-b-2 [&>a]:border-[#9bbbd8] [&>a]:pt-[1px]">
  <button aria-label="开始" class="ml-[10px]"><svg width="16" height="16" fill="#fff"><path d="M0 2l7-1v6.500H0zM8 1l8-1v7.500H8zM0 8.500h7V15l-7-1zM8 8.500h8V16l-8-1z"/></svg></button>
  <button aria-label="任务视图" class="mr-[17px] ml-[20px]"><svg width="16" height="15" fill="none" stroke="#eee"><path d="M1 0v2.500h9V0M1 15v-2.500h9V15M.5 5h10v5H.5zM14 0v3M14 8v7"/><path d="M12.500 4h3v3h-3z" fill="#fff" stroke="none"/></svg></button>
  <a href="#" aria-label="浏览器"><svg width="16" height="16"><circle cx="8" cy="8" r="8" fill="#f08a1c"/><path d="M3 10q2-6 10-6l-3 3 2 1-4 1-1 3-2-2z" fill="#fff"/></svg></a>
  <a href="#" aria-label="文件资源管理器" class="ml-[9px]"><svg width="16" height="14"><path d="M0 1h6l1 2h9v10H0z" fill="#f2cf6b"/><path d="M3 14V8h10v6h-3v-3H6v3z" fill="#4a9ad4"/></svg></a>
  <a href="#" aria-label="3ds Max" class="ml-[9px]"><svg width="16" height="16"><path d="M0 0h16v16H0z" fill="#cfe9e8"/><path d="M4 2h8v5l-2 1 2 1v5H4v-2h5V9H6V7h3V5H4z" fill="#177f80"/></svg></a>
  <a href="#" class="ml-[9px]"><span class="grid size-[16px] place-items-center rounded-xs bg-[#072036] font-['Open_Sans',sans-serif] text-[9px] leading-none font-bold text-[#3ea6f5]">Ps</span></a>
  <a href="#" aria-label="录屏" class="ml-[9px]"><svg width="16" height="16"><circle cx="8" cy="8" r="7" fill="#111" stroke="#ddd" stroke-width="1.500"/><circle cx="8" cy="8" r="4.500" fill="#e8202a"/></svg></a>
  <a href="#" aria-label="微信" class="ml-[9px]"><svg width="16" height="14"><ellipse cx="6" cy="5" rx="6" ry="5" fill="#2fc25b"/><ellipse cx="11" cy="9" rx="5" ry="4.200" fill="#e8f4ea"/><path d="M3.500 3.500h1v1h-1zM7 3.500h1v1H7zM9 8h1v1H9zM12 8h1v1h-1z" fill="#233"/></svg></a>
  <time class="mr-[12px] ml-auto self-center font-['Open_Sans','Noto_Sans_CJK_SC',sans-serif] text-white">下午 3:47</time>
  <div class="pointer-events-none absolute -top-[16px] left-[8px] flex items-center gap-[12px] font-['Open_Sans',sans-serif] text-[36px] leading-[36px] font-semibold text-white/20"><svg width="40" height="34" fill="none" stroke="currentColor" stroke-width="5"><rect x="3" y="3" width="34" height="28" rx="4"/><path d="M12 24V11h9v8h-8"/></svg>tafe.cc</div>
</div>
</body>
</html>
